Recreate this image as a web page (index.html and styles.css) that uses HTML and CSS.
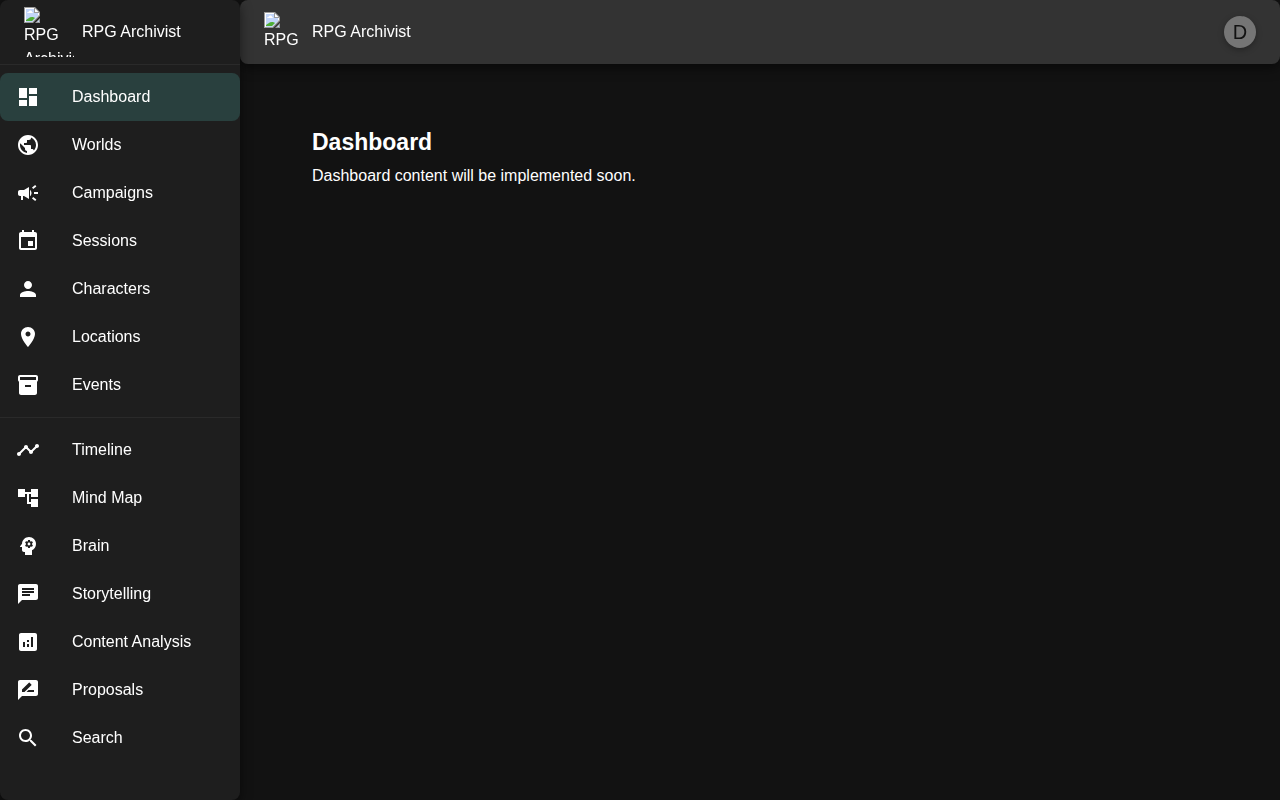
FILE: index.html
```html
<!DOCTYPE html>
<html lang="en">
<head>
<meta charset="utf-8">
<meta name="viewport" content="width=device-width, initial-scale=1">
<title>RPG Archivist</title>
<link rel="stylesheet" href="styles.css">
</head>
<body>
<svg class="sprite" aria-hidden="true">
  <symbol id="missing" viewBox="0 0 16 16">
    <path fill="#9a9a9a" d="M0 0h11l5 5v4l-7 7H0z"/>
    <path fill="#fff" d="M1 1h9v5h5v2l-7 7H1z"/>
    <path fill="#c3d6fa" d="M2 2h8v4h4v3l-6 6H2z"/>
    <path fill="#fff" d="M3 6c0-1 1-1 1.500-1C5 3 8 3 8 5c1 0 1 1 1 1zM11 1.500V5h3.500z"/>
    <path fill="#4fae35" d="M2 14v-1c2-1 3-3 6-3 1 0 2 0 3 1l-3 3z"/>
    <path fill="#9a9a9a" d="M16 11v5h-5z"/>
    <path fill="#c3d6fa" d="M15 13v2h-2z"/>
  </symbol>
</svg>
<div class="app">
  <aside class="sidebar">
    <div class="brand">
      <span class="logo logo-large"><svg class="missing"><use href="#missing"/></svg>RPG Archivist</span>
      <span>RPG Archivist</span>
    </div>
    <nav>
      <ul class="menu">
        <li><a class="item selected" href="#dashboard" aria-current="page"><svg class="icon" viewBox="0 0 24 24"><path d="M3 13h8V3H3v10zm0 8h8v-6H3v6zm10 0h8V11h-8v10zm0-18v6h8V3h-8z"/></svg>Dashboard</a></li>
        <li><a class="item" href="#worlds"><svg class="icon" viewBox="0 0 24 24"><path d="M12 2C6.480 2 2 6.480 2 12s4.480 10 10 10 10-4.480 10-10S17.520 2 12 2zm-1 17.930c-3.950-.49-7-3.850-7-7.930 0-.62.08-1.210.21-1.790L9 15v1c0 1.100.9 2 2 2v1.930zm6.900-2.540c-.26-.81-1-1.390-1.900-1.390h-1v-3c0-.55-.45-1-1-1H8v-2h2c.55 0 1-.45 1-1V7h2c1.100 0 2-.9 2-2v-.41c2.930 1.190 5 4.060 5 7.410 0 2.080-.8 3.970-2.100 5.390z"/></svg>Worlds</a></li>
        <li><a class="item" href="#campaigns"><svg class="icon" viewBox="0 0 24 24"><path d="M18 11v2h4v-2h-4zm-2 6.610c.96.71 2.210 1.650 3.200 2.390.4-.53.8-1.070 1.200-1.600-.99-.74-2.240-1.680-3.200-2.400-.4.54-.8 1.080-1.200 1.610zM20.400 5.600c-.4-.53-.8-1.070-1.200-1.600-.99.74-2.240 1.680-3.200 2.400.4.53.8 1.070 1.200 1.600.96-.72 2.210-1.650 3.200-2.400zM4 9c-1.100 0-2 .9-2 2v2c0 1.100.9 2 2 2h1v4h2v-4h1l5 3V6L8 9H4zm11.500 3c0-1.330-.58-2.530-1.500-3.350v6.690c.92-.81 1.500-2.010 1.500-3.340z"/></svg>Campaigns</a></li>
        <li><a class="item" href="#sessions"><svg class="icon" viewBox="0 0 24 24"><path d="M17 12h-5v5h5v-5zM16 1v2H8V1H6v2H5c-1.110 0-1.990.9-1.990 2L3 19c0 1.100.89 2 2 2h14c1.100 0 2-.9 2-2V5c0-1.100-.9-2-2-2h-1V1h-2zm3 18H5V8h14v11z"/></svg>Sessions</a></li>
        <li><a class="item" href="#characters"><svg class="icon" viewBox="0 0 24 24"><path d="M12 12c2.210 0 4-1.790 4-4s-1.790-4-4-4-4 1.790-4 4 1.790 4 4 4zm0 2c-2.670 0-8 1.340-8 4v2h16v-2c0-2.660-5.330-4-8-4z"/></svg>Characters</a></li>
        <li><a class="item" href="#locations"><svg class="icon" viewBox="0 0 24 24"><path d="M12 2C8.130 2 5 5.130 5 9c0 5.250 7 13 7 13s7-7.750 7-13c0-3.870-3.130-7-7-7zm0 9.500c-1.380 0-2.500-1.120-2.500-2.500s1.120-2.500 2.500-2.500 2.500 1.120 2.500 2.500-1.120 2.500-2.500 2.500z"/></svg>Locations</a></li>
        <li><a class="item" href="#events"><svg class="icon" viewBox="0 0 24 24"><path d="M20 2H4c-1 0-2 .9-2 2v3.010c0 .72.43 1.340 1 1.690V20c0 1.100 1.100 2 2 2h14c.9 0 2-.9 2-2V8.700c.57-.35 1-.97 1-1.690V4c0-1.100-1-2-2-2zm-5 12H9v-2h6v2zm5-7H4V4h16v3z"/></svg>Events</a></li>
      </ul>
      <ul class="menu">
        <li><a class="item" href="#timeline"><svg class="icon" viewBox="0 0 24 24"><path d="M23 8c0 1.100-.9 2-2 2-.18 0-.35-.02-.51-.07l-3.560 3.550c.05.16.07.34.07.52 0 1.100-.9 2-2 2s-2-.9-2-2c0-.18.02-.36.07-.52l-2.550-2.550c-.16.05-.34.07-.52.07s-.36-.02-.52-.07l-4.550 4.560c.05.16.07.33.07.51 0 1.100-.9 2-2 2s-2-.9-2-2 .9-2 2-2c.18 0 .35.02.51.07l4.560-4.550C8.020 9.360 8 9.180 8 9c0-1.100.9-2 2-2s2 .9 2 2c0 .18-.02.36-.07.52l2.550 2.550c.16-.05.34-.07.52-.07s.36.02.52.07l3.550-3.560C19.020 8.350 19 8.180 19 8c0-1.100.9-2 2-2s2 .9 2 2z"/></svg>Timeline</a></li>
        <li><a class="item" href="#mind-map"><svg class="icon" viewBox="0 0 24 24"><path d="M22 11V3h-7v3H9V3H2v8h7V8h2v10h4v3h7v-8h-7v3h-2V8h2v3z"/></svg>Mind Map</a></li>
        <li><a class="item" href="#brain"><svg class="icon" viewBox="0 0 24 24"><path d="M13 8.570c-.79 0-1.430.64-1.430 1.430s.64 1.430 1.430 1.430 1.430-.64 1.430-1.430-.64-1.430-1.430-1.430z"/><path d="M13 3C9.250 3 6.200 5.940 6.020 9.640L4.100 12.200c-.25.33-.01.8.4.8H6v3c0 1.100.9 2 2 2h1v3h7v-4.680c2.360-1.120 4-3.530 4-6.320 0-3.870-3.130-7-7-7zm3 7c0 .13-.01.26-.02.39l.83.66c.08.06.1.16.05.25l-.8 1.390c-.05.09-.16.12-.24.09l-.99-.4c-.21.16-.43.29-.67.39L14 13.830c-.01.1-.1.17-.2.17h-1.600c-.1 0-.18-.07-.2-.17l-.15-1.060c-.25-.1-.47-.23-.68-.39l-.99.4c-.09.03-.2 0-.25-.09l-.8-1.390c-.05-.08-.03-.19.05-.25l.84-.66c-.01-.13-.02-.26-.02-.39s.02-.27.04-.39l-.85-.66c-.08-.06-.1-.16-.05-.26l.8-1.380c.05-.09.15-.12.24-.09l1 .4c.2-.15.43-.29.67-.39L12 6.170c.02-.1.1-.17.2-.17h1.600c.1 0 .18.07.2.17l.15 1.060c.24.1.46.23.67.39l1-.4c.09-.03.2 0 .24.09l.8 1.380c.05.09.03.2-.05.26l-.85.66c.03.12.04.25.04.39z"/></svg>Brain</a></li>
        <li><a class="item" href="#storytelling"><svg class="icon" viewBox="0 0 24 24"><path d="M20 2H4c-1.100 0-1.990.9-1.990 2L2 22l4-4h14c1.100 0 2-.9 2-2V4c0-1.100-.9-2-2-2zM6 9h12v2H6V9zm8 5H6v-2h8v2zm4-6H6V6h12v2z"/></svg>Storytelling</a></li>
        <li><a class="item" href="#content-analysis"><svg class="icon" viewBox="0 0 24 24"><path d="M19 3H5c-1.100 0-2 .9-2 2v14c0 1.100.9 2 2 2h14c1.100 0 2-.9 2-2V5c0-1.100-.9-2-2-2zM9 17H7v-5h2v5zm4 0h-2v-3h2v3zm0-5h-2v-2h2v2zm4 5h-2V7h2v10z"/></svg>Content Analysis</a></li>
        <li><a class="item" href="#proposals"><svg class="icon" viewBox="0 0 24 24"><path d="M20 2H4c-1.100 0-1.990.9-1.990 2L2 22l4-4h14c1.100 0 2-.9 2-2V4c0-1.100-.9-2-2-2zM6 14v-2.470l6.880-6.880c.2-.2.51-.2.71 0l1.770 1.770c.2.2.2.51 0 .71L8.470 14H6zm12 0h-7.500l2-2H18v2z"/></svg>Proposals</a></li>
        <li><a class="item" href="#search"><svg class="icon" viewBox="0 0 24 24"><path d="M15.500 14h-.79l-.28-.27C15.410 12.590 16 11.110 16 9.500 16 5.910 13.090 3 9.500 3S3 5.910 3 9.500 5.910 16 9.500 16c1.610 0 3.090-.59 4.230-1.570l.27.28v.79l5 4.990L20.490 19l-4.990-5zm-6 0C7.010 14 5 11.990 5 9.500S7.010 5 9.500 5 14 7.010 14 9.500 11.990 14 9.500 14z"/></svg>Search</a></li>
      </ul>
    </nav>
  </aside>
  <div class="page">
    <header class="topbar">
      <span class="logo"><svg class="missing"><use href="#missing"/></svg>RPG Archivist</span>
      <span>RPG Archivist</span>
      <button class="avatar" type="button" aria-label="Account">D</button>
    </header>
    <main class="content">
      <h1>Dashboard</h1>
      <p>Dashboard content will be implemented soon.</p>
    </main>
  </div>
</div>
</body>
</html>
```
FILE: styles.css
```css
* {
  box-sizing: border-box;
}

body {
  margin: 0;
  background: #121212;
  color: #fff;
  font-family: "Liberation Sans", Arial, sans-serif;
  font-size: 16px;
  line-height: 24px;
}

.sprite {
  display: none;
}

.app {
  display: flex;
  min-height: 100vh;
}

.sidebar {
  flex: 0 0 240px;
  position: relative;
  z-index: 1;
  background: #1e1e1e;
  border-radius: 8px;
  box-shadow: 0 4px 12px rgba(0, 0, 0, 0.5);
  will-change: transform;
}

.brand,
.topbar {
  display: flex;
  align-items: center;
  gap: 8px;
  height: 64px;
  padding: 0 24px;
}

.logo {
  flex: none;
  width: 40px;
  height: 40px;
  overflow: hidden;
}

.logo-large {
  width: 50px;
  height: 50px;
}

.missing {
  display: block;
  width: 16px;
  height: 16px;
}

.menu {
  margin: 0;
  padding: 8px 0;
  border-top: 1px solid #2a2a2a;
  list-style: none;
}

.item {
  display: flex;
  align-items: center;
  gap: 32px;
  height: 48px;
  padding: 0 16px;
  border-radius: 8px;
  color: inherit;
  text-decoration: none;
}

.selected {
  background: #29403e;
}

.icon {
  flex: none;
  width: 24px;
  height: 24px;
  fill: currentColor;
}

.page {
  flex: 1;
  min-width: 0;
}

.topbar {
  background: #333;
  border-radius: 8px;
  box-shadow: 0 4px 12px rgba(0, 0, 0, 0.5);
  will-change: transform;
}

.avatar {
  width: 32px;
  height: 32px;
  margin-left: auto;
  padding: 0;
  border: 0;
  border-radius: 50%;
  background: #757575;
  box-shadow: 0 2px 6px rgba(0, 0, 0, 0.3);
  color: #121212;
  font: 20px/32px "Liberation Sans", Arial, sans-serif;
}

.content {
  padding: 64px 72px;
}

h1 {
  margin: 0 0 8px;
  font-size: 23px;
  line-height: 28px;
}

p {
  margin: 0;
}
```
